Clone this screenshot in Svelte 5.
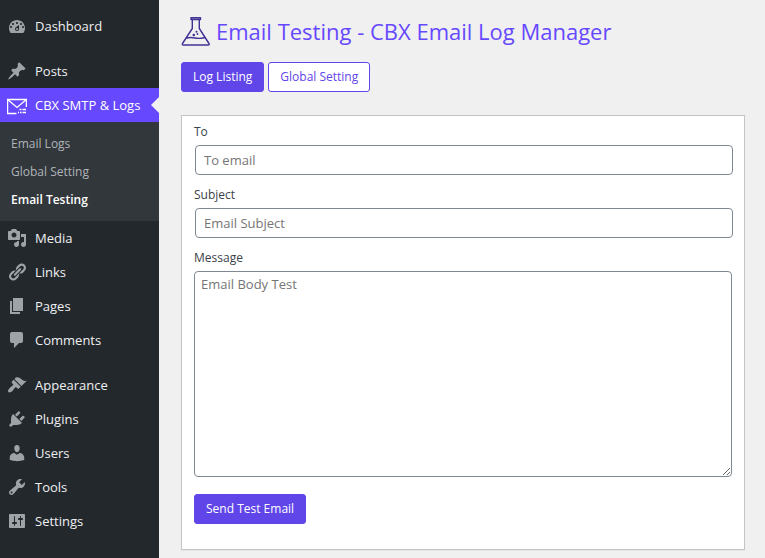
<script>
  const groups = [
    [
      { label: 'Dashboard', icon: 'M3.76 17h12.48c1.1-1.37 1.76-3.11 1.76-5 0-4.42-3.58-8-8-8s-8 3.58-8 8c0 1.89.66 3.63 1.76 5zM10 6c.55 0 1 .45 1 1s-.45 1-1 1-1-.45-1-1 .45-1 1-1zM6 7c.55 0 1 .45 1 1s-.45 1-1 1-1-.45-1-1 .45-1 1-1zm8 0c.55 0 1 .45 1 1s-.45 1-1 1-1-.45-1-1 .45-1 1-1zm-5.37 4.55L12 9v4c0 1.1-.9 2-2 2s-2-.9-2-2c0-.57.24-1.08.63-1.45zM4 10c.55 0 1 .45 1 1s-.45 1-1 1-1-.45-1-1 .45-1 1-1zm12 0c.55 0 1 .45 1 1s-.45 1-1 1-1-.45-1-1 .45-1 1-1zm-5 3c0-.55-.45-1-1-1s-1 .45-1 1 .45 1 1 1 1-.45 1-1z' }
    ],
    [
      { label: 'Posts', icon: 'M10.44 3.02l1.82-1.82 6.36 6.35-1.83 1.82c-1.05-.68-2.48-.57-3.41.36l-.75.75c-.92.93-1.04 2.35-.35 3.41l-1.83 1.82-2.41-2.41-2.8 2.79c-.42.42-3.38 2.71-3.8 2.29s1.86-3.39 2.28-3.81l2.79-2.79L4.1 9.36l1.83-1.82c1.05.69 2.48.57 3.4-.36l.75-.75c.93-.92 1.05-2.35.36-3.41z' },
      { label: 'CBX SMTP & Logs', current: true, children: ['Email Logs', 'Global Setting', 'Email Testing'] },
      { label: 'Media', icon: 'M13 11V4c0-.55-.45-1-1-1h-1.67L9 1H5L3.67 3H2c-.55 0-1 .45-1 1v7c0 .55.45 1 1 1h10c.55 0 1-.45 1-1zM7 4.5c1.38 0 2.5 1.12 2.5 2.5S8.38 9.5 7 9.5 4.5 8.38 4.5 7 5.62 4.5 7 4.5zM14 6h5v10.5c0 1.38-1.12 2.5-2.5 2.5S14 17.88 14 16.5s1.12-2.5 2.5-2.5c.17 0 .34.02.5.05V9h-3V6zm-4 8.05V13h2v3.5c0 1.38-1.12 2.5-2.5 2.5S7 17.88 7 16.5 8.12 14 9.5 14c.17 0 .34.02.5.05z' },
      { label: 'Links', icon: 'M17.74 2.76c1.68 1.69 1.68 4.41 0 6.1l-1.53 1.52c-1.12 1.12-2.7 1.47-4.14 1.09l2.62-2.61.76-.77.76-.76c.84-.84.84-2.2 0-3.04-.84-.85-2.2-.85-3.04 0l-.77.76-3.38 3.38c-.37-1.44-.02-3.02 1.1-4.14l1.52-1.53c1.69-1.68 4.42-1.68 6.1 0zM8.59 13.43l5.34-5.34c.42-.42.42-1.1 0-1.52-.44-.43-1.13-.39-1.53 0l-5.33 5.34c-.42.42-.42 1.1 0 1.52.44.43 1.13.39 1.52 0zm-.76 2.29l4.14-4.15c.38 1.44.03 3.02-1.09 4.14l-1.52 1.53c-1.69 1.68-4.41 1.68-6.1 0-1.68-1.68-1.68-4.42 0-6.1l1.53-1.52c1.12-1.12 2.7-1.47 4.14-1.1l-4.14 4.15c-.85.84-.85 2.2 0 3.05.84.84 2.2.84 3.04 0z' },
      { label: 'Pages', icon: 'M6 15V2h10v13H6zm-1 1h8v2H3V5h2v11z' },
      { label: 'Comments', icon: 'M5 2h9c1.1 0 2 .9 2 2v7c0 1.1-.9 2-2 2h-2l-5 5v-5H5c-1.1 0-2-.9-2-2V4c0-1.1.9-2 2-2z' }
    ],
    [
      { label: 'Appearance', icon: 'M14.48 11.06L7.41 3.99l1.5-1.5c.5-.56 2.3-.47 3.51.32 1.21.8 1.43 1.28 2.91 2.1 1.18.64 2.45 1.26 4.45.85zm-.71.71L6.7 4.7 4.93 6.47c-.39.39-.39 1.02 0 1.41l1.06 1.06c.39.39.39 1.03 0 1.42-.6.6-1.43 1.11-2.21 1.69-.35.26-.7.53-1.01.84C1.43 14.23.4 16.08 1.4 17.07c.99 1 2.84-.03 4.18-1.36.31-.31.58-.66.85-1.02.57-.78 1.08-1.61 1.69-2.21.39-.39 1.02-.39 1.41 0l1.06 1.06c.39.39 1.02.39 1.41 0z' },
      { label: 'Plugins', icon: 'M13.11 4.36L9.87 7.6 8 5.73l3.24-3.24c.35-.34 1.05-.2 1.56.32.52.51.66 1.21.31 1.55zm-8 1.77l.91-1.12 9.01 9.01-1.19.84c-.71.71-2.63 1.16-3.82 1.16H6.14L4.9 17.26c-.59.59-1.54.59-2.12 0-.59-.58-.59-1.53 0-2.12l1.24-1.24v-3.88c0-1.13.4-3.19 1.09-3.89zm7.26 3.97l3.24-3.24c.34-.35 1.04-.21 1.55.31.52.51.66 1.21.31 1.55l-3.24 3.25z' },
      { label: 'Users', icon: 'M10 9.25c-2.27 0-2.73-3.44-2.73-3.44C7 4.02 7.82 2 9.97 2c2.16 0 2.98 2.02 2.71 3.81 0 0-.41 3.44-2.68 3.44zm0 2.57L12.72 10c2.39 0 4.52 2.33 4.52 4.53v2.49s-3.65 1.13-7.24 1.13c-3.65 0-7.24-1.13-7.24-1.13v-2.49c0-2.25 1.94-4.48 4.47-4.48z' },
      { label: 'Tools', icon: 'M16.68 9.77c-1.34 1.34-3.3 1.67-4.95.99l-5.41 6.52c-.99.99-2.59.99-3.58 0s-.99-2.59 0-3.57l6.52-5.42c-.68-1.65-.35-3.61.99-4.95 1.28-1.28 3.12-1.62 4.72-1.06l-2.89 2.89 2.82 2.82 2.86-2.87c.53 1.58.18 3.39-1.08 4.65zM3.81 16.21c.4.39 1.04.39 1.43 0 .4-.4.4-1.04 0-1.43-.39-.4-1.03-.4-1.43 0-.39.39-.39 1.03 0 1.43z' },
      { label: 'Settings', icon: 'M18 16V4c0-.55-.45-1-1-1H3c-.55 0-1 .45-1 1v12c0 .55.45 1 1 1h14c.55 0 1-.45 1-1zM8 11h1c.55 0 1 .45 1 1s-.45 1-1 1H8v1.5c0 .28-.22.5-.5.5s-.5-.22-.5-.5V13H6c-.55 0-1-.45-1-1s.45-1 1-1h1V5.5c0-.28.22-.5.5-.5s.5.22.5.5V11zm5-2h-1c-.55 0-1-.45-1-1s.45-1 1-1h1V5.5c0-.28.22-.5.5-.5s.5.22.5.5V7h1c.55 0 1 .45 1 1s-.45 1-1 1h-1v5.5c0 .28-.22.5-.5.5s-.5-.22-.5-.5V9z' }
    ]
  ];

  let to = $state('');
  let subject = $state('');
  let message = $state('');
</script>

<div class="admin">
  <nav class="sidebar">
    {#each groups as group}
      <ul class="menu">
        {#each group as item}
          <li>
            <a class="item" class:current={item.current} href="#menu">
              {#if item.icon}
                <svg class="icon" viewBox="0 0 20 20" aria-hidden="true"><path d={item.icon} /></svg>
              {:else}
                <svg class="icon mail" viewBox="0 0 20 20" aria-hidden="true">
                  <path d="M9.5 18.5H.6V4.500h18.800v7.500M.6 4.500l9.400 8 9.400-8" />
                  <path d="M12.500 14.500h2m1 0h3.500M11 17.500h1m1 0h1.500m1 0h3.500" />
                </svg>
              {/if}
              <span>{item.label}</span>
            </a>
            {#if item.children}
              <ul class="submenu">
                {#each item.children as child}
                  <li><a class:active={child === 'Email Testing'} href="#submenu">{child}</a></li>
                {/each}
              </ul>
            {/if}
          </li>
        {/each}
      </ul>
    {/each}
  </nav>

  <main>
    <h1>
      <svg class="flask" viewBox="0 0 30 30" aria-hidden="true">
        <path d="M10 1.700h9.500v1.800H10zM11.300 3.500v9L1.500 27.500q-.8 1.500 1 1.500h24.500q1.800 0 1-1.500L18.300 12.500v-9M5.500 22q4.500-1 8.500 0t10-.5" />
        <circle cx="15.500" cy="15.800" r="1" /><circle cx="12.800" cy="19" r="1.300" /><circle cx="16.500" cy="18" r=".9" />
      </svg>
      <span>Email Testing - CBX Email Log Manager</span>
    </h1>
    <div class="actions">
      <a class="button primary" href="#logs">Log Listing</a>
      <a class="button" href="#settings">Global Setting</a>
    </div>

    <form class="card" onsubmit={(e) => e.preventDefault()}>
      <label for="to">To</label>
      <input id="to" type="email" placeholder="To email" bind:value={to} />
      <label for="subject">Subject</label>
      <input id="subject" type="text" placeholder="Email Subject" bind:value={subject} />
      <label for="message">Message</label>
      <textarea id="message" placeholder="Email Body Test" bind:value={message}></textarea>
      <button class="button primary" type="submit">Send Test Email</button>
    </form>
  </main>
</div>

<style>
  :global(body) {
    background: #f0f0f1;
  }
  .admin {
    display: flex;
    min-height: 100vh;
    font-family: "Open Sans", "Noto Sans", sans-serif;
    font-size: 13px;
    color: #3c434a;
  }
  .admin * {
    box-sizing: border-box;
  }
  a {
    text-decoration: none;
  }
  ul {
    margin: 0;
    padding: 0;
    list-style: none;
  }
  .sidebar {
    flex: 0 0 159px;
    display: flex;
    flex-direction: column;
    gap: 11px;
    padding: 9px 0;
    background: #23282d;
  }
  .item {
    position: relative;
    display: flex;
    align-items: center;
    gap: 8px;
    height: 34px;
    padding-left: 7px;
    color: #f0f0f1;
    white-space: nowrap;
  }
  .icon {
    flex: none;
    width: 20px;
    height: 20px;
    fill: #9ea3a8;
  }
  .mail {
    fill: none;
    stroke: #fff;
    stroke-width: 1.3;
  }
  .current {
    background: #6648fe;
    color: #fff;
  }
  .current::after {
    content: "";
    position: absolute;
    right: 0;
    top: 9px;
    border: 8px solid transparent;
    border-left-width: 0;
    border-right-color: #f0f0f1;
  }
  .submenu {
    padding: 8px 0 7px;
    background: #32373c;
  }
  .submenu a {
    display: block;
    padding: 0 11px;
    font-size: 12px;
    line-height: 28px;
    color: #b0b4b8;
  }
  .submenu .active {
    color: #fff;
    font-weight: 600;
  }
  main {
    flex: 1;
    min-width: 0;
    padding: 15px 20px 8px 22px;
  }
  h1 {
    display: flex;
    align-items: center;
    gap: 5px;
    margin: 0 0 15px;
    font-size: 22px;
    font-weight: 400;
    line-height: 32px;
    color: #6648fe;
  }
  .flask {
    flex: none;
    width: 30px;
    height: 30px;
    fill: #403294;
  }
  .flask path {
    fill: none;
    stroke: #403294;
    stroke-width: 1.4;
    stroke-linejoin: round;
  }
  .actions {
    display: flex;
    gap: 4px;
    margin-bottom: 23px;
  }
  .button {
    padding: 0 11px;
    border: 1px solid #6045e8;
    border-radius: 3px;
    background: #fff;
    color: #6045e8;
    font-family: inherit;
    font-size: 12px;
    line-height: 28px;
  }
  .primary {
    background: #6045e8;
    color: #fff;
  }
  .card {
    display: flex;
    flex-direction: column;
    align-items: flex-start;
    padding: 6px 12px 25px;
    border: 1px solid #c3c4c7;
    background: #fff;
    box-shadow: 0 1px 1px #0000000a;
  }
  label {
    margin-bottom: 3px;
    font-size: 12px;
    line-height: 20px;
  }
  input,
  textarea {
    width: 100%;
    border: 1px solid #7e8993;
    border-radius: 4px;
    background: #fff;
    font-family: inherit;
    font-size: 13px;
    color: #32373c;
  }
  input {
    height: 30px;
    margin: 0 0 10px 1px;
    padding: 0 8px;
  }
  textarea {
    display: block;
    height: 206px;
    margin-bottom: 17px;
    padding: 2px 6px;
    line-height: 20px;
  }
  ::placeholder {
    color: #757575;
  }
</style>
